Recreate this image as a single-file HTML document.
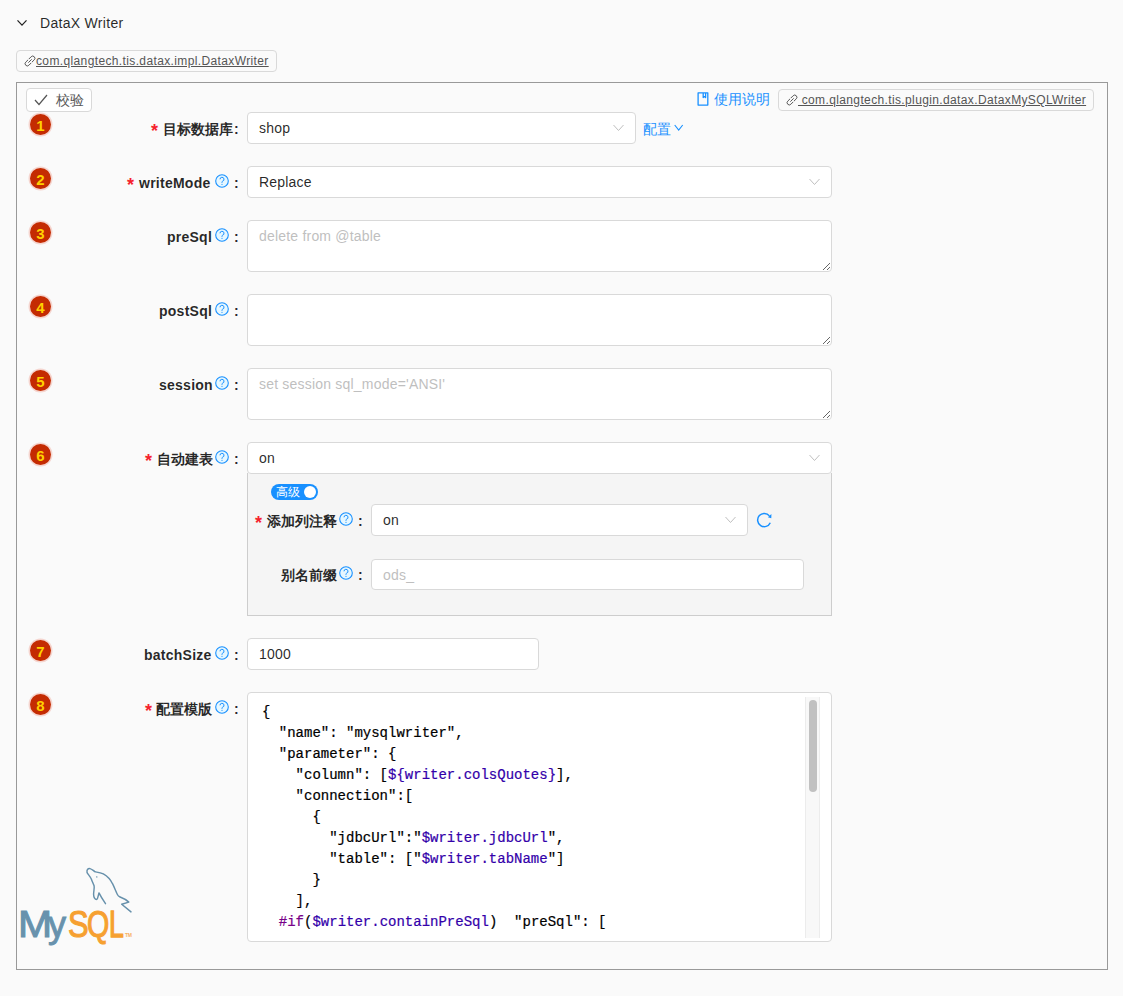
<!DOCTYPE html>
<html><head><meta charset="utf-8">
<style>
*{box-sizing:border-box;margin:0;padding:0}
html,body{width:1123px;height:996px;overflow:hidden;background:#fafafa;font-family:"Liberation Sans",sans-serif;color:rgba(0,0,0,.85);font-size:14px}
.a{position:absolute;white-space:nowrap}
.tag{position:absolute;border:1px solid #d9d9d9;border-radius:4px;background:#fafafa;font-size:12px;color:#555;white-space:nowrap;letter-spacing:.37px}
.tag u{text-decoration:underline}
.box{position:absolute;left:16px;top:82px;width:1092px;height:888px;border:1px solid #999}
.badge{position:absolute;left:30px;width:21px;height:21px;border-radius:50%;background:#c42b02;box-shadow:0 0 0 1.5px #f5d5cf;color:#ffd000;font-weight:bold;font-size:15px;text-align:center;line-height:24px}
.inp{position:absolute;background:#fff;border:1px solid #d9d9d9;border-radius:4px;font-size:14px;color:rgba(0,0,0,.85);padding-left:11px;white-space:nowrap;letter-spacing:.2px}
.ph{color:#bfbfbf}
.lbl{position:absolute;font-weight:bold;font-size:14px;white-space:nowrap;height:20px;line-height:20px;letter-spacing:.25px}
.cn{letter-spacing:0}
.req{position:absolute;color:#f5222d;font-weight:bold;font-size:18px;line-height:20px;margin-top:2px}
.q{position:absolute;width:14px;height:14px}
.colon{position:absolute;font-weight:bold}
.chev{position:absolute}
.rs{position:absolute;right:0;bottom:0}
.code{position:absolute;font-family:"Liberation Mono",monospace;font-size:14px;line-height:21px;color:#000;white-space:pre;-webkit-text-stroke:.2px currentColor}
.lg{font-size:37px;line-height:37px;transform-origin:0 0;-webkit-text-stroke:.5px currentColor}
.v{color:#30a}.k{color:#708}
</style></head><body>

<!-- header -->
<svg class="a" style="left:16px;top:18px" width="12" height="10" viewBox="0 0 12 10"><path d="M1.5 2.3 L6 7.2 L10.5 2.3" fill="none" stroke="#222" stroke-width="1.25"/></svg>
<div class="a" style="left:40px;top:14px;font-size:14px;line-height:18px;color:rgba(0,0,0,.85);letter-spacing:.3px">DataX Writer</div>
<div class="tag" style="left:16px;top:50px;width:261px;height:22px;line-height:20px;padding-left:8px">
<svg style="vertical-align:-2px;margin-left:-1px;margin-right:0" width="12" height="12" viewBox="0 0 12 12"><path d="M5.1 3.8 L7.14 1.74 A2.2 2.2 0 0 1 10.26 4.86 L8.2 6.9 M6.9 8.2 L4.86 10.26 A2.2 2.2 0 0 1 1.74 7.14 L3.8 5.1 M4.6 7.4 L7.4 4.6" fill="none" stroke="#595959" stroke-width="1" stroke-linecap="round"/></svg><u>com.qlangtech.tis.datax.impl.DataxWriter</u></div>

<div class="box"></div>

<!-- validate button -->
<div class="a" style="left:26px;top:88px;width:66px;height:24px;border:1px solid #d9d9d9;border-radius:4px;background:#fff"></div>
<svg class="a" style="left:34px;top:94px" width="14" height="12" viewBox="0 0 14 12"><path d="M1 6 L5 10.5 L13 1" fill="none" stroke="#555" stroke-width="1.2"/></svg>
<div class="a" style="left:56px;top:91px;font-size:14px;line-height:18px;color:#555">校验</div>

<!-- top right -->
<svg class="a" style="left:696px;top:91px" width="14" height="16" viewBox="0 0 14 16"><path d="M2.1 1.8 H11.8 V14.1 H2.1 Z M7.2 1.8 V6.6 L8.4 5.6 L9.6 6.6 V1.8" fill="none" stroke="#1890ff" stroke-width="1.3" stroke-linejoin="round"/></svg>
<div class="a" style="left:714px;top:90px;font-size:14px;line-height:18px;color:#1890ff">使用说明</div>
<div class="tag" style="left:778px;top:89px;width:316px;height:22px;line-height:20px;padding-left:8px">
<svg style="vertical-align:-2px;margin-left:-1px" width="12" height="12" viewBox="0 0 12 12"><path d="M5.1 3.8 L7.14 1.74 A2.2 2.2 0 0 1 10.26 4.86 L8.2 6.9 M6.9 8.2 L4.86 10.26 A2.2 2.2 0 0 1 1.74 7.14 L3.8 5.1 M4.6 7.4 L7.4 4.6" fill="none" stroke="#595959" stroke-width="1" stroke-linecap="round"/></svg><u> com.qlangtech.tis.plugin.datax.DataxMySQLWriter</u></div>

<!-- badges -->
<div class="badge" style="top:114px">1</div>
<div class="badge" style="top:168px">2</div>
<div class="badge" style="top:222px">3</div>
<div class="badge" style="top:296px">4</div>
<div class="badge" style="top:370px">5</div>
<div class="badge" style="top:444px">6</div>
<div class="badge" style="top:640px">7</div>
<div class="badge" style="top:694px">8</div>

<!-- row 1 -->
<span class="req" style="left:151px;top:119px">*</span>
<div class="lbl cn" style="left:163px;top:119px">目标数据库</div>
<div class="colon" style="left:234px;top:119px;line-height:20px">:</div>
<div class="inp" style="left:247px;top:112px;width:389px;height:32px;line-height:30px">shop
<svg class="chev" style="right:11px;top:11px" width="11" height="8" viewBox="0 0 11 8"><path d="M0.5 1 L5.5 6.5 L10.5 1" fill="none" stroke="#bfbfbf" stroke-width="1"/></svg></div>
<div class="a" style="left:643px;top:119px;line-height:20px;color:#1890ff">配置</div>
<svg class="a" style="left:674px;top:124px" width="10" height="8" viewBox="0 0 10 8"><path d="M0.7 1 L4.7 6 L8.7 1" fill="none" stroke="#1890ff" stroke-width="1.1"/></svg>

<!-- row 2 -->
<span class="req" style="left:127px;top:173px">*</span>
<div class="lbl" style="left:139px;top:173px">writeMode</div>
<svg class="q" style="left:215px;top:174px" viewBox="0 0 14 14"><circle cx="7" cy="7" r="6.3" fill="#e6f7ff" stroke="#1890ff" stroke-width="1.1"/><path d="M5 5.3 a2 2 0 1 1 2.6 1.9 c-.5 .2 -.6 .5 -.6 1.1 v.6" fill="none" stroke="#1890ff" stroke-width="1"/><circle cx="7" cy="10.3" r=".6" fill="#1890ff"/></svg>
<div class="colon" style="left:234px;top:173px;line-height:20px">:</div>
<div class="inp" style="left:247px;top:166px;width:585px;height:32px;line-height:30px">Replace
<svg class="chev" style="right:11px;top:11px" width="11" height="8" viewBox="0 0 11 8"><path d="M0.5 1 L5.5 6.5 L10.5 1" fill="none" stroke="#bfbfbf" stroke-width="1"/></svg></div>

<!-- row 3 -->
<div class="lbl" style="left:167px;top:227px">preSql</div>
<svg class="q" style="left:215px;top:228px" viewBox="0 0 14 14"><circle cx="7" cy="7" r="6.3" fill="#e6f7ff" stroke="#1890ff" stroke-width="1.1"/><path d="M5 5.3 a2 2 0 1 1 2.6 1.9 c-.5 .2 -.6 .5 -.6 1.1 v.6" fill="none" stroke="#1890ff" stroke-width="1"/><circle cx="7" cy="10.3" r=".6" fill="#1890ff"/></svg>
<div class="colon" style="left:234px;top:227px;line-height:20px">:</div>
<div class="inp ph" style="left:247px;top:220px;width:585px;height:52px;line-height:20px;padding-top:5px">delete from @table
<svg class="rs" width="10" height="10" viewBox="0 0 10 10"><path d="M2 9 L9 2 M6 9 L9 6" stroke="#666" stroke-width="1"/></svg></div>

<!-- row 4 -->
<div class="lbl" style="left:159px;top:301px">postSql</div>
<svg class="q" style="left:215px;top:302px" viewBox="0 0 14 14"><circle cx="7" cy="7" r="6.3" fill="#e6f7ff" stroke="#1890ff" stroke-width="1.1"/><path d="M5 5.3 a2 2 0 1 1 2.6 1.9 c-.5 .2 -.6 .5 -.6 1.1 v.6" fill="none" stroke="#1890ff" stroke-width="1"/><circle cx="7" cy="10.3" r=".6" fill="#1890ff"/></svg>
<div class="colon" style="left:234px;top:301px;line-height:20px">:</div>
<div class="inp" style="left:247px;top:294px;width:585px;height:52px">
<svg class="rs" width="10" height="10" viewBox="0 0 10 10"><path d="M2 9 L9 2 M6 9 L9 6" stroke="#666" stroke-width="1"/></svg></div>

<!-- row 5 -->
<div class="lbl" style="left:159px;top:375px">session</div>
<svg class="q" style="left:215px;top:376px" viewBox="0 0 14 14"><circle cx="7" cy="7" r="6.3" fill="#e6f7ff" stroke="#1890ff" stroke-width="1.1"/><path d="M5 5.3 a2 2 0 1 1 2.6 1.9 c-.5 .2 -.6 .5 -.6 1.1 v.6" fill="none" stroke="#1890ff" stroke-width="1"/><circle cx="7" cy="10.3" r=".6" fill="#1890ff"/></svg>
<div class="colon" style="left:234px;top:375px;line-height:20px">:</div>
<div class="inp ph" style="left:247px;top:368px;width:585px;height:52px;line-height:20px;padding-top:5px">set session sql_mode='ANSI'
<svg class="rs" width="10" height="10" viewBox="0 0 10 10"><path d="M2 9 L9 2 M6 9 L9 6" stroke="#666" stroke-width="1"/></svg></div>

<!-- row 6 -->
<span class="req" style="left:145px;top:449px">*</span>
<div class="lbl cn" style="left:157px;top:449px">自动建表</div>
<svg class="q" style="left:215px;top:450px" viewBox="0 0 14 14"><circle cx="7" cy="7" r="6.3" fill="#e6f7ff" stroke="#1890ff" stroke-width="1.1"/><path d="M5 5.3 a2 2 0 1 1 2.6 1.9 c-.5 .2 -.6 .5 -.6 1.1 v.6" fill="none" stroke="#1890ff" stroke-width="1"/><circle cx="7" cy="10.3" r=".6" fill="#1890ff"/></svg>
<div class="colon" style="left:234px;top:449px;line-height:20px">:</div>
<div class="a" style="left:247px;top:473px;width:585px;height:143px;background:#f5f5f5;border:1px solid #cdcdcd;border-top:none"></div>
<div class="inp" style="left:247px;top:442px;width:585px;height:32px;line-height:30px">on
<svg class="chev" style="right:11px;top:11px" width="11" height="8" viewBox="0 0 11 8"><path d="M0.5 1 L5.5 6.5 L10.5 1" fill="none" stroke="#bfbfbf" stroke-width="1"/></svg></div>

<!-- sub panel -->
<div class="a" style="left:271px;top:484px;width:47px;height:16px;border-radius:8px;background:#1890ff"></div>
<div class="a" style="left:276px;top:484px;font-size:12px;line-height:16px;color:#fff">高级</div>
<div class="a" style="left:304px;top:486px;width:12px;height:12px;border-radius:50%;background:#fff"></div>

<span class="req" style="left:255px;top:511px">*</span>
<div class="lbl cn" style="left:267px;top:511px">添加列注释</div>
<svg class="q" style="left:339px;top:512px" viewBox="0 0 14 14"><circle cx="7" cy="7" r="6.3" fill="#e6f7ff" stroke="#1890ff" stroke-width="1.1"/><path d="M5 5.3 a2 2 0 1 1 2.6 1.9 c-.5 .2 -.6 .5 -.6 1.1 v.6" fill="none" stroke="#1890ff" stroke-width="1"/><circle cx="7" cy="10.3" r=".6" fill="#1890ff"/></svg>
<div class="colon" style="left:358px;top:511px;line-height:20px">:</div>
<div class="inp" style="left:371px;top:504px;width:377px;height:32px;line-height:30px">on
<svg class="chev" style="right:11px;top:11px" width="11" height="8" viewBox="0 0 11 8"><path d="M0.5 1 L5.5 6.5 L10.5 1" fill="none" stroke="#bfbfbf" stroke-width="1"/></svg></div>
<svg class="a" style="left:755px;top:511px" width="18" height="18" viewBox="0 0 18 18"><path d="M15.28 11.69 A6.6 6.6 0 1 1 14.4 4.9" fill="none" stroke="#1890ff" stroke-width="1.5"/><path d="M12.9 6.3 L16.4 3 L16.3 7.2 Z" fill="#1890ff"/></svg>

<div class="lbl cn" style="left:281px;top:565px">别名前缀</div>
<svg class="q" style="left:339px;top:566px" viewBox="0 0 14 14"><circle cx="7" cy="7" r="6.3" fill="#e6f7ff" stroke="#1890ff" stroke-width="1.1"/><path d="M5 5.3 a2 2 0 1 1 2.6 1.9 c-.5 .2 -.6 .5 -.6 1.1 v.6" fill="none" stroke="#1890ff" stroke-width="1"/><circle cx="7" cy="10.3" r=".6" fill="#1890ff"/></svg>
<div class="colon" style="left:358px;top:565px;line-height:20px">:</div>
<div class="inp ph" style="left:371px;top:559px;width:433px;height:31px;line-height:31px">ods_</div>

<!-- row 7 -->
<div class="lbl" style="left:144px;top:645px">batchSize</div>
<svg class="q" style="left:215px;top:646px" viewBox="0 0 14 14"><circle cx="7" cy="7" r="6.3" fill="#e6f7ff" stroke="#1890ff" stroke-width="1.1"/><path d="M5 5.3 a2 2 0 1 1 2.6 1.9 c-.5 .2 -.6 .5 -.6 1.1 v.6" fill="none" stroke="#1890ff" stroke-width="1"/><circle cx="7" cy="10.3" r=".6" fill="#1890ff"/></svg>
<div class="colon" style="left:234px;top:645px;line-height:20px">:</div>
<div class="inp" style="left:247px;top:638px;width:292px;height:32px;line-height:30px">1000</div>

<!-- row 8 -->
<span class="req" style="left:145px;top:699px">*</span>
<div class="lbl cn" style="left:156px;top:699px">配置模版</div>
<svg class="q" style="left:215px;top:700px" viewBox="0 0 14 14"><circle cx="7" cy="7" r="6.3" fill="#e6f7ff" stroke="#1890ff" stroke-width="1.1"/><path d="M5 5.3 a2 2 0 1 1 2.6 1.9 c-.5 .2 -.6 .5 -.6 1.1 v.6" fill="none" stroke="#1890ff" stroke-width="1"/><circle cx="7" cy="10.3" r=".6" fill="#1890ff"/></svg>
<div class="colon" style="left:234px;top:699px;line-height:20px">:</div>
<div class="a" style="left:247px;top:692px;width:585px;height:250px;background:#fff;border:1px solid #d9d9d9;border-radius:4px;overflow:hidden">
<div class="code" style="left:14px;top:9px;height:233px;overflow:hidden">{
  "name": "mysqlwriter",
  "parameter": {
    "column": [<span class="v">${writer.colsQuotes}</span>],
    "connection":[
      {
        "jdbcUrl":"<span class="v">$writer.jdbcUrl</span>",
        "table": ["<span class="v">$writer.tabName</span>"]
      }
    ],
  <span class="k">#if</span>(<span class="v">$writer.containPreSql</span>)  "preSql": [
      "<span class="v">$writer.preSql</span>"
</div>
<div class="a" style="left:557px;top:4px;width:15px;height:241px;background:#f8f8f8;border-left:1px solid #ececec;border-right:1px solid #ececec"></div>
<div class="a" style="left:561px;top:7px;width:8px;height:92px;border-radius:4px;background:#c1c1c1"></div>
</div>

<!-- mysql logo -->
<div class="a" style="left:0;top:0;width:160px;height:996px">
<span class="a lg" style="left:17.7px;top:905.5px;color:#6892ad;transform:scaleX(1.105);-webkit-text-stroke:1px currentColor">M</span>
<span class="a lg" style="left:48px;top:905.5px;color:#6892ad;transform:scaleX(.98);-webkit-text-stroke:.9px currentColor">y</span>
<span class="a lg" style="left:67.5px;top:905.5px;color:#f6a030;transform:scaleX(.835);-webkit-text-stroke:1.1px currentColor">S</span>
<span class="a lg" style="left:87.1px;top:905.5px;color:#f6a030;transform:scaleX(.774);-webkit-text-stroke:1.1px currentColor">Q</span>
<span class="a lg" style="left:109.1px;top:905.5px;color:#f6a030;transform:scaleX(.72);-webkit-text-stroke:1.3px currentColor">L</span>
<span class="a" style="left:125px;top:931px;font-size:5px;line-height:8px;color:#f8b060;font-weight:bold;letter-spacing:-.2px">TM</span>
</div>
<svg class="a" style="left:0;top:0" width="160" height="996" viewBox="0 0 160 996"><path d="M105.5 903.7 C103 900 100.5 896 99 892.9 C98.2 895.5 97.8 899 96.8 899.4 C95 899.8 93.6 897 93.6 894.5 C93.6 891 94.6 888 94.1 885.8 C93 883 92 881 91.4 879.3 C90 876 87.5 874 87 872.3 C86.7 869.5 88 868.3 90 868.6 C92 869 93.5 871 95.2 871.8 C98 872.3 101 872.8 103.3 873.9 C107 876 110.5 879.5 112.5 883.7 C114.5 887.5 116 892 117.4 894.5 C118 895.8 118.8 896.4 119.6 896.7 C123 898 126 899.5 128.8 902.1 L121.7 904.3 L131 911.9" fill="none" stroke="#6690ab" stroke-width="1.45" stroke-linejoin="round" stroke-linecap="round"/><circle cx="96.8" cy="876.9" r="0.7" fill="#5b87a3"/></svg>
</body></html>
